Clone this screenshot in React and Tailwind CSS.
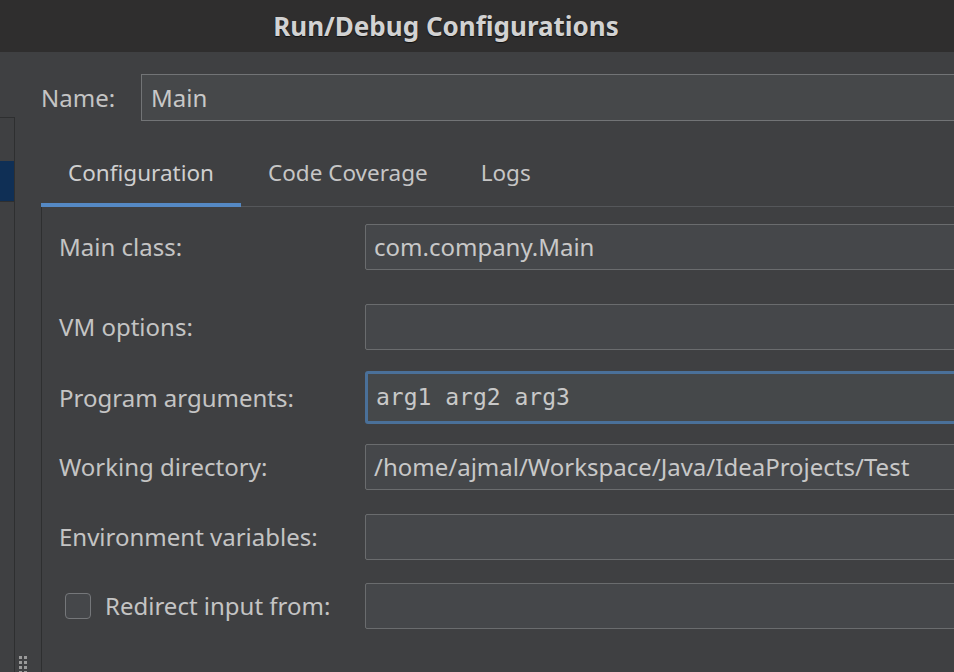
function Field({ children, focused, mono }) {
  if (focused) {
    return (
      <div className="flex-1 h-[53px] rounded-[3px] border-[3px] border-[#4a7099] bg-[#45484a] flex items-center pl-[8px]">
        <span className={`text-[23px] text-[#c8c8c8] ${mono ? "font-['DejaVu_Sans_Mono',monospace]" : ''}`}>{children}</span>
      </div>
    )
  }
  return (
    <div className="flex-1 h-[46px] rounded-[2px] border border-[#6a6c6e] bg-[#45474a] flex items-center pl-[8px]">
      <span className="text-[24px] text-[#c8c8c8]">{children}</span>
    </div>
  )
}

function Row({ label, checkbox, children, className }) {
  return (
    <div className={`flex items-center ${className}`}>
      <div className="w-[306px] shrink-0 flex items-center">
        {checkbox && (
          <div className="ml-[6px] mr-[14px] w-[26px] h-[26px] rounded-[4px] border-[1.5px] border-[#75777a] bg-[#45474a]" />
        )}
        <span className="text-[24px] text-[#c4c4c4]">{label}</span>
      </div>
      {children}
    </div>
  )
}

export default function App() {
  return (
    <div className="w-[954px] h-[672px] overflow-hidden bg-[#3f4042] font-['Noto_Sans',sans-serif] flex flex-col">
      {/* Title bar */}
      <div className="h-[52px] shrink-0 bg-[#2f2e2e] flex items-center justify-center pr-[62px]">
        <span className="text-[26px] font-bold text-[#d2d2d2] [text-shadow:0_1px_1px_#111]">
          Run/Debug Configurations
        </span>
      </div>

      <div className="flex-1 flex">
        {/* Tree sidebar */}
        <div className="w-[15px] shrink-0 mt-[65px] border-t border-r border-[#2e2f30] flex flex-col relative">
          <div className="h-[43px]" />
          <div className="h-[40px] bg-[#0f2f55]" />
          <div className="h-px bg-[#2e2f30]" />
          <svg className="absolute left-[19px] bottom-0" width="9" height="18" viewBox="0 0 9 18">
            {[0, 1, 2, 3].map(r => [0, 1].map(c => (
              <rect key={`${r}-${c}`} x={c * 5} y={r * 5 + 2} width="3" height="3" fill="#9a9a9a" />
            )))}
          </svg>
        </div>
        <div className="w-[26px] shrink-0" />

        {/* Main column */}
        <div className="w-[1000px] shrink-0 flex flex-col">
          <div className="flex items-center mt-[22px] h-[47px]">
            <span className="w-[100px] text-[24px] text-[#c4c4c4]">Name:</span>
            <div className="flex-1 h-[47px] border border-[#727476] bg-[#46484a] flex items-center pl-[9px]">
              <span className="text-[24px] text-[#c8c8c8]">Main</span>
            </div>
          </div>

          {/* Tabs */}
          <div className="flex items-end mt-[20px] h-[66px] border-b border-[#55575a]">
            <div className="w-[200px] h-full flex flex-col">
              <div className="flex-1 flex items-center justify-center pt-[2px]">
                <span className="text-[22.5px] text-[#cfcfcf]">Configuration</span>
              </div>
              <div className="h-[4px] bg-[#5589c4] mb-[-1px]" />
            </div>
            <div className="h-full flex items-center pl-[27px] pr-[53px] pb-[2px]">
              <span className="text-[22.5px] text-[#c6c6c6]">Code Coverage</span>
            </div>
            <div className="h-full flex items-center pb-[2px]">
              <span className="text-[22.5px] text-[#c6c6c6]">Logs</span>
            </div>
          </div>

          {/* Configuration panel */}
          <div className="flex-1 border-l border-[#2e2f30] pl-[17px] pt-[17px] flex flex-col">
            <Row label="Main class:">
              <Field>com.company.Main</Field>
            </Row>
            <Row label="VM options:" className="mt-[34px]">
              <Field />
            </Row>
            <Row label="Program arguments:" className="mt-[21px]">
              <Field focused mono>arg1 arg2 arg3</Field>
            </Row>
            <Row label="Working directory:" className="mt-[20px]">
              <Field>/home/ajmal/Workspace/Java/IdeaProjects/Test</Field>
            </Row>
            <Row label="Environment variables:" className="mt-[24px]">
              <Field />
            </Row>
            <Row label="Redirect input from:" checkbox className="mt-[23px]">
              <Field />
            </Row>
          </div>
        </div>
      </div>
    </div>
  )
}
